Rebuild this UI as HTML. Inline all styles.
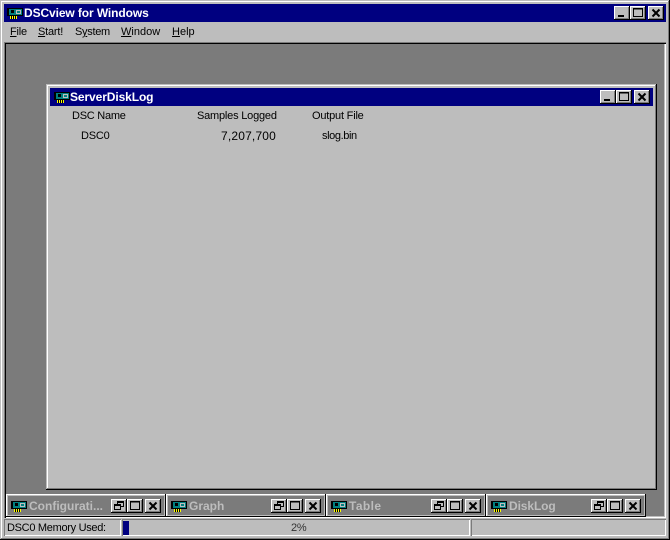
<!DOCTYPE html>
<html><head><meta charset="utf-8">
<style>
html,body{margin:0;padding:0;background:#bdbdbd}
#r{position:relative;width:670px;height:540px;overflow:hidden;background:#bdbdbd;font-family:"Liberation Sans",sans-serif;font-size:11px;color:#000}
#r div,#r svg{position:absolute}
.t{white-space:nowrap;line-height:14px}
.b{font-weight:bold;font-size:12px;line-height:16px;white-space:nowrap}
.btn{width:16px;height:14px;background:#bdbdbd;box-shadow:inset -1px -1px 0 #000,inset 1px 1px 0 #fff,inset -2px -2px 0 #7b7b7b}
u{text-decoration:underline}
</style></head><body>
<div id="r">
<svg width="0" height="0" style="position:absolute">
<defs>
<g id="ic" shape-rendering="crispEdges">
<rect x="0" y="0" width="2" height="8" fill="#000"/>
<rect x="2" y="0" width="14" height="8" fill="#008080"/>
<rect x="2" y="0" width="14" height="1" fill="#000"/>
<rect x="15" y="0" width="1" height="8" fill="#000"/>
<rect x="2" y="7" width="14" height="1" fill="#000"/>
<rect x="4" y="2" width="3" height="3" fill="#000"/>
<rect x="9" y="2" width="5" height="4" fill="#bdbdbd"/>
<rect x="10" y="3" width="3" height="2" fill="#008080"/>
<rect x="3" y="8" width="7" height="3" fill="#ffff00"/>
<rect x="4" y="8" width="1" height="3" fill="#000"/>
<rect x="6" y="8" width="1" height="3" fill="#000"/>
<rect x="8" y="8" width="1" height="3" fill="#000"/>
</g>
<g id="mn" shape-rendering="crispEdges"><rect x="4" y="9" width="6" height="2" fill="#000"/></g>
<g id="mx" shape-rendering="crispEdges"><path d="M3.5 2.5h9v8h-9zM3 3h10" fill="none" stroke="#000"/></g>
<g id="cl"><path d="M4.5 3.5l7 7M11.5 3.5l-7 7" stroke="#000" stroke-width="2" fill="none"/></g>
<g id="rs" shape-rendering="crispEdges"><path d="M6.5 2.5h6v5h-3M6 3h6M3.5 5.5h6v5h-6zM3 6h6M6.5 2.5v3" fill="none" stroke="#000"/><rect x="3" y="5" width="7" height="2" fill="#000"/><rect x="6" y="2" width="7" height="2" fill="#000"/></g>
</defs>
</svg>

<!-- outer window frame -->
<div style="left:0;top:0;width:670px;height:540px;box-shadow:inset -1px -1px 0 #000,inset 1px 1px 0 #bdbdbd,inset -2px -2px 0 #7b7b7b,inset 2px 2px 0 #fff"></div>
<!-- title bar -->
<div style="left:4px;top:4px;width:662px;height:18px;background:#000080"></div>
<svg style="left:7px;top:8px" width="18" height="12"><use href="#ic"/></svg>
<div class="b" style="left:24px;top:5px;color:#fff;letter-spacing:-.1px">DSCview for Windows</div>
<div class="btn" style="left:614px;top:6px"><svg width="16" height="14" style="left:0;top:0"><use href="#mn"/></svg></div>
<div class="btn" style="left:630px;top:6px"><svg width="16" height="14" style="left:0;top:0"><use href="#mx"/></svg></div>
<div class="btn" style="left:648px;top:6px"><svg width="16" height="14" style="left:0;top:0"><use href="#cl"/></svg></div>
<!-- menu -->
<div class="t" style="left:10px;top:25px;letter-spacing:-.2px"><u>F</u>ile</div>
<div class="t" style="left:38px;top:25px;letter-spacing:-.2px"><u>S</u>tart!</div>
<div class="t" style="left:75px;top:25px;letter-spacing:-.3px">S<u>y</u>stem</div>
<div class="t" style="left:121px;top:25px"><u>W</u>indow</div>
<div class="t" style="left:172px;top:25px"><u>H</u>elp</div>
<!-- MDI client -->
<div style="left:4px;top:42px;width:662px;height:476px;background:#7b7b7b;box-shadow:inset 1px 1px 0 #7b7b7b,inset 2px 2px 0 #000,inset -1px -1px 0 #fff,inset -2px -2px 0 #bdbdbd"></div>
<!-- child window -->
<div style="left:46px;top:84px;width:611px;height:406px;background:#bdbdbd;box-shadow:inset -1px -1px 0 #000,inset 1px 1px 0 #bdbdbd,inset -2px -2px 0 #7b7b7b,inset 2px 2px 0 #fff"></div>
<div style="left:50px;top:88px;width:603px;height:18px;background:#000080"></div>
<svg style="left:54px;top:92px" width="18" height="12"><use href="#ic"/></svg>
<div class="b" style="left:70px;top:89px;color:#fff;letter-spacing:-.1px">ServerDiskLog</div>
<div class="btn" style="left:600px;top:90px"><svg width="16" height="14" style="left:0;top:0"><use href="#mn"/></svg></div>
<div class="btn" style="left:616px;top:90px"><svg width="16" height="14" style="left:0;top:0"><use href="#mx"/></svg></div>
<div class="btn" style="left:634px;top:90px"><svg width="16" height="14" style="left:0;top:0"><use href="#cl"/></svg></div>
<div class="t" style="left:72px;top:109px;letter-spacing:-.25px">DSC Name</div>
<div class="t" style="left:197px;top:109px;letter-spacing:-.2px">Samples Logged</div>
<div class="t" style="left:312px;top:109px;letter-spacing:-.2px">Output File</div>
<div class="t" style="left:81px;top:129px;letter-spacing:-.2px">DSC0</div>
<div class="t" style="left:221px;top:129px;font-size:12px;letter-spacing:.18px">7,207,700</div>
<div class="t" style="left:322px;top:129px;letter-spacing:-.4px">slog.bin</div>
<!-- minimized windows -->
<div style="left:6px;top:494px;width:160px;height:23px;background:#bdbdbd;box-shadow:inset -1px -1px 0 #000,inset 1px 1px 0 #fff"></div>
<div style="left:8px;top:496px;width:156px;height:19px;background:#7b7b7b"></div>
<svg style="left:11px;top:501px" width="18" height="12"><use href="#ic"/></svg>
<div class="b" style="left:29px;top:498px;color:#bdbdbd">Configurati...</div>
<div class="btn" style="left:111px;top:499px"><svg width="16" height="14" style="left:0;top:0"><use href="#rs"/></svg></div>
<div class="btn" style="left:127px;top:499px"><svg width="16" height="14" style="left:0;top:0"><use href="#mx"/></svg></div>
<div class="btn" style="left:145px;top:499px"><svg width="16" height="14" style="left:0;top:0"><use href="#cl"/></svg></div>

<div style="left:166px;top:494px;width:160px;height:23px;background:#bdbdbd;box-shadow:inset -1px -1px 0 #000,inset 1px 1px 0 #fff"></div>
<div style="left:168px;top:496px;width:156px;height:19px;background:#7b7b7b"></div>
<svg style="left:171px;top:501px" width="18" height="12"><use href="#ic"/></svg>
<div class="b" style="left:189px;top:498px;color:#bdbdbd">Graph</div>
<div class="btn" style="left:271px;top:499px"><svg width="16" height="14" style="left:0;top:0"><use href="#rs"/></svg></div>
<div class="btn" style="left:287px;top:499px"><svg width="16" height="14" style="left:0;top:0"><use href="#mx"/></svg></div>
<div class="btn" style="left:305px;top:499px"><svg width="16" height="14" style="left:0;top:0"><use href="#cl"/></svg></div>

<div style="left:326px;top:494px;width:160px;height:23px;background:#bdbdbd;box-shadow:inset -1px -1px 0 #000,inset 1px 1px 0 #fff"></div>
<div style="left:328px;top:496px;width:156px;height:19px;background:#7b7b7b"></div>
<svg style="left:331px;top:501px" width="18" height="12"><use href="#ic"/></svg>
<div class="b" style="left:349px;top:498px;color:#bdbdbd;letter-spacing:.4px">Table</div>
<div class="btn" style="left:431px;top:499px"><svg width="16" height="14" style="left:0;top:0"><use href="#rs"/></svg></div>
<div class="btn" style="left:447px;top:499px"><svg width="16" height="14" style="left:0;top:0"><use href="#mx"/></svg></div>
<div class="btn" style="left:465px;top:499px"><svg width="16" height="14" style="left:0;top:0"><use href="#cl"/></svg></div>

<div style="left:486px;top:494px;width:160px;height:23px;background:#bdbdbd;box-shadow:inset -1px -1px 0 #000,inset 1px 1px 0 #fff"></div>
<div style="left:488px;top:496px;width:156px;height:19px;background:#7b7b7b"></div>
<svg style="left:491px;top:501px" width="18" height="12"><use href="#ic"/></svg>
<div class="b" style="left:509px;top:498px;color:#bdbdbd;letter-spacing:-.1px">DiskLog</div>
<div class="btn" style="left:591px;top:499px"><svg width="16" height="14" style="left:0;top:0"><use href="#rs"/></svg></div>
<div class="btn" style="left:607px;top:499px"><svg width="16" height="14" style="left:0;top:0"><use href="#mx"/></svg></div>
<div class="btn" style="left:625px;top:499px"><svg width="16" height="14" style="left:0;top:0"><use href="#cl"/></svg></div>
<!-- status bar -->
<div style="left:4px;top:519px;width:117px;height:17px;box-shadow:inset 1px 1px 0 #7b7b7b,inset -1px -1px 0 #fff"></div>
<div class="t" style="left:7px;top:521px;letter-spacing:-.3px">DSC0 Memory Used:</div>
<div style="left:122px;top:519px;width:348px;height:17px;box-shadow:inset 1px 1px 0 #7b7b7b,inset -1px -1px 0 #fff"></div>
<div style="left:123px;top:521px;width:6px;height:14px;background:#000080"></div>
<div class="t" style="left:291px;top:521px;color:#333;letter-spacing:-.3px">2%</div>
<div style="left:471px;top:519px;width:195px;height:17px;box-shadow:inset 1px 1px 0 #7b7b7b,inset -1px -1px 0 #fff"></div>
</div>
</body></html>
